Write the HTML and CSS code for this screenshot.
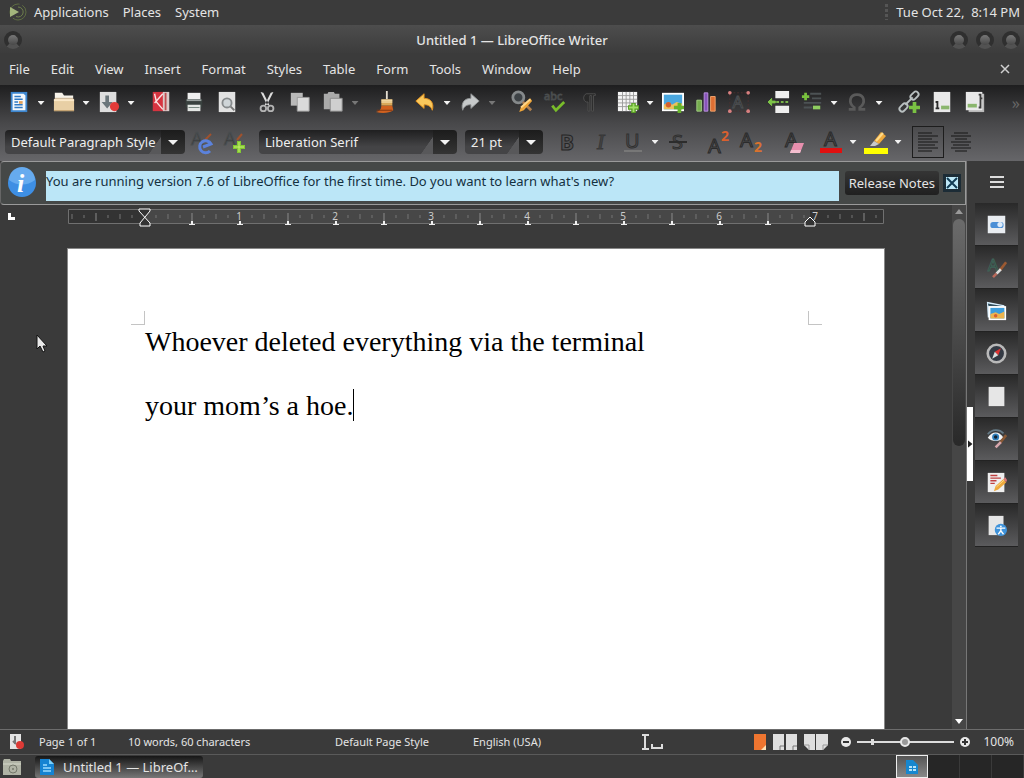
FILE: index.html
```html
<!DOCTYPE html>
<html lang="en">
<head>
    <meta charset="UTF-8">
    <meta name="viewport" content="width=device-width, initial-scale=1.0">
    <title>Untitled 1 — LibreOffice Writer</title>
    <link rel="stylesheet" href="styles.css">
</head>
<body>
<!-- Desktop panel -->
<header class="panel">
    <svg class="panel-logo" width="20" height="20" viewBox="0 0 20 20"><circle cx="10" cy="10" r="8" fill="none" stroke="#5e6d42" stroke-dasharray="18 3"/><path d="M10 5a5 5 0 1 1-2 9.500" fill="none" stroke="#6e7f4c"/><path d="M2 5l9 5-9 5z" fill="#a3b57c"/></svg>
    <nav class="panel-menu">
        <button>Applications</button>
        <button>Places</button>
        <button>System</button>
    </nav>
    <span class="grip"></span>
    <time class="clock">Tue Oct 22,&nbsp; 8:14 PM</time>
</header>

<!-- Window title -->
<div class="titlebar">
    <button class="orb" aria-label="Window menu"></button>
    <h1 class="title">Untitled 1 — LibreOffice Writer</h1>
    <div class="orbs">
        <button class="orb" aria-label="Minimize"></button>
        <button class="orb" aria-label="Maximize"></button>
        <button class="orb" aria-label="Close"></button>
    </div>
</div>

<nav class="menubar">
    <button>File</button>
    <button>Edit</button>
    <button>View</button>
    <button>Insert</button>
    <button>Format</button>
    <button>Styles</button>
    <button>Table</button>
    <button>Form</button>
    <button>Tools</button>
    <button>Window</button>
    <button>Help</button>
    <button class="close-doc" aria-label="Close document"><svg width="10" height="10" viewBox="0 0 10 10"><path d="M1 1l8 8M9 1l-8 8" stroke="#d0d0d0" stroke-width="1.500"/></svg></button>
</nav>

<div class="toolbars">
    <!-- Standard toolbar -->
    <div class="toolbar">
        <div class="group">
            <div class="split">
                <button class="tool" aria-label="New"><svg viewBox="0 0 24 24"><path d="M3 1h18v22H3z" fill="#3d86cf"/><path d="M5 3h12l2 2v16H5z" fill="#f4f8fc"/><path d="M7 6h7M7 9h9M7 12h4M7 15h9M7 18h9" stroke="#2f79c4" stroke-width="1.500"/><path d="M12 11h4v3h-4z" fill="#e2a05b"/></svg></button>
                <button class="drop" aria-label="New options"></button>
            </div>
            <div class="split">
                <button class="tool" aria-label="Open"><svg viewBox="0 0 24 24"><path d="M2 2h8l2 3h10v5H2z" fill="#f7f3ea"/><path d="M2 8h20" stroke="#c5ab85"/><path d="M1 9h22v13H1z" fill="#e8cfa5"/><path d="M1 9h22v2H1z" fill="#fbe9ca"/><path d="M1 21h22v1H1z" fill="#b89562"/></svg></button>
                <button class="drop" aria-label="Open options"></button>
            </div>
            <div class="split">
                <button class="tool" aria-label="Save"><svg viewBox="0 0 24 24"><path d="M2 1h18v22H2z" fill="#dedede"/><path d="M8 5h4v7h4l-6 7-6-7h4z" fill="#6b767b"/><circle cx="18" cy="17" r="5" fill="#e23a38"/></svg></button>
                <button class="drop" aria-label="Save options"></button>
            </div>
        </div>
        <div class="group">
            <button class="tool" aria-label="Export as PDF"><svg viewBox="0 0 24 24"><path d="M3 1h12v21H3z" fill="#d63440"/><path d="M14 1h7v21h-7z" fill="#d9c9c8"/><path d="M17 2v19" stroke="#c24d50" stroke-width="2"/><path d="M5 3l2 9 7 8M14 3l-9 10" fill="none" stroke="#fbe2e2" stroke-width="1.500"/></svg></button>
            <button class="tool" aria-label="Print"><svg viewBox="0 0 24 24"><path d="M5 2h14v7H5z" fill="#f0f0f0"/><path d="M3 9h18v9H3z" fill="#39413f"/><path d="M4 9h16v2H4z" fill="#9aa19f"/><path d="M5 15h14v7H5z" fill="#e4e7e4"/><path d="M6 18h12" stroke="#70807a"/></svg></button>
            <button class="tool" aria-label="Print preview"><svg viewBox="0 0 24 24"><path d="M3 1h18v22H3z" fill="#e2e2e2"/><circle cx="12" cy="13" r="5" fill="#cfd5d8" stroke="#878b8d" stroke-width="2"/><path d="M16 17l4 4" stroke="#777" stroke-width="2"/></svg></button>
        </div>
        <div class="group">
            <button class="tool" aria-label="Cut"><svg viewBox="0 0 24 24"><path d="M5 1l3 1 7 14-3-1zM19 1l-3 1-7 14 3-1z" fill="#dcdcdc"/><circle cx="8" cy="19" r="3" fill="none" stroke="#b4b4b4" stroke-width="2"/><circle cx="16" cy="19" r="3" fill="none" stroke="#b4b4b4" stroke-width="2"/></svg></button>
            <button class="tool" aria-label="Copy"><svg viewBox="0 0 24 24"><path d="M2 2h13v14H2z" fill="#b9b9b9"/><path d="M9 7h13v15H9z" fill="#dadada" stroke="#999"/></svg></button>
            <div class="split">
                <button class="tool" aria-label="Paste"><svg viewBox="0 0 24 24"><path d="M2 3h4l1-2h6l1 2h5v17H2z" fill="#aaa"/><path d="M9 8h13v14H9z" fill="#cfcfcf" stroke="#8b8b8b"/></svg></button>
                <button class="drop dim" aria-label="Paste options"></button>
            </div>
        </div>
        <div class="group">
            <button class="tool" aria-label="Clone formatting"><svg viewBox="0 0 24 24"><path d="M14 0v9" stroke="#e3ddd0" stroke-width="2"/><path d="M8 9h12v7H8z" fill="#d9a95a"/><path d="M8 10h12M8 12h12" stroke="#fff4cf"/><path d="M8 16h12l1 5c-4 3-11 4-19 2 4-1 6-3 6-7z" fill="#d0611f"/><path d="M3 21h17" stroke="#7e3612"/></svg></button>
        </div>
        <div class="group">
            <div class="split">
                <button class="tool" aria-label="Undo"><svg viewBox="0 0 24 24"><path d="M2 11l9-8v5c8 0 11 6 9 13-2-5-5-6-9-6v4z" fill="#f9c85c" stroke="#e18f1e"/></svg></button>
                <button class="drop" aria-label="Undo options"></button>
            </div>
            <div class="split">
                <button class="tool" aria-label="Redo"><svg viewBox="0 0 24 24"><path d="M22 11l-9-8v5C5 8 2 14 4 21c2-5 5-6 9-6v4z" fill="#c6c9ca" stroke="#8c8f90"/></svg></button>
                <button class="drop dim" aria-label="Redo options"></button>
            </div>
        </div>
        <div class="group">
            <button class="tool" aria-label="Find and replace"><svg viewBox="0 0 24 24"><circle cx="8" cy="7" r="6" fill="#3d4246" stroke="#85898b" stroke-width="3"/><path d="M13 12l9 9" stroke="#b08050" stroke-width="3"/><path d="M9 23l2-6 10-9 2 3-9 10z" fill="#eea53a"/><path d="M11 18l10-9" stroke="#ffd78a" stroke-width="2"/></svg></button>
            <button class="tool" aria-label="Spelling"><svg viewBox="0 0 24 24"><text x="0" y="10" font-size="12" fill="#222" stroke="#4a4d4e">abc</text><path d="M9 16l4 5 9-9" fill="none" stroke="#79bd2a" stroke-width="3"/></svg></button>
            <button class="tool" aria-label="Formatting marks"><svg viewBox="0 0 24 24"><path d="M18 3h-8a5 5 0 0 0 0 9h2v10h2V5h2v17h2V5h2V3z" fill="#292929" stroke="#505050"/></svg></button>
        </div>
        <div class="group">
            <div class="split">
                <button class="tool" aria-label="Insert table"><svg viewBox="0 0 24 24"><path d="M1 1h21v21H1z" fill="#f5f5f5"/><path d="M1 5h21M1 9h21M1 13h21M1 17h21M6 1v21M10 1v21M14 1v21M18 1v21" stroke="#999"/><path d="M18 13v11M12 18h12" stroke="#599e24" stroke-width="5"/><path d="M18 14v9M13 18h10" stroke="#a2e068" stroke-width="2"/></svg></button>
                <button class="drop" aria-label="Table options"></button>
            </div>
            <button class="tool" aria-label="Insert image"><svg viewBox="0 0 24 24"><path d="M0 2h24v20H0z" fill="#fff"/><path d="M2 4h20v16H2z" fill="#4aa7df"/><path d="M2 15l5-3 4 3 5-3 6 2v6H2z" fill="#edc05c"/><circle cx="7" cy="15" r="3" fill="#d45f2f"/><path d="M19 13v11M13 18h11" stroke="#67b42c" stroke-width="4"/></svg></button>
            <button class="tool" aria-label="Insert chart"><svg viewBox="0 0 24 24"><path d="M2 10h5v12H2z" fill="#75ab4e" stroke="#a4d184"/><path d="M10 2h4v20h-4z" fill="#8855ba" stroke="#be95e4"/><path d="M17 6h5v16h-5z" fill="#df6f33" stroke="#f5a66e"/></svg></button>
            <button class="tool" aria-label="Text box"><svg viewBox="0 0 24 24"><path d="M2 2h20v20H2z" fill="none" stroke="#4c3030" stroke-dasharray="2 2"/><text x="5" y="18" font-size="18" fill="#222" stroke="#4e5154">A</text><g fill="#d98080"><circle cx="2" cy="2" r="2"/><circle cx="22" cy="2" r="2"/><circle cx="2" cy="22" r="2"/><circle cx="22" cy="22" r="2"/></g></svg></button>
        </div>
        <div class="group">
            <button class="tool" aria-label="Page break"><svg viewBox="0 0 24 24"><path d="M8 0h15v8H8zM8 16h15v8H8z" fill="#eee"/><path d="M9 12h14" stroke="#78b34a" stroke-width="2" stroke-dasharray="3 2"/><path d="M0 12l4-4v3h4v2H4v3z" fill="#7ec548" stroke="#7ec548"/></svg></button>
            <div class="split">
                <button class="tool" aria-label="Insert field"><svg viewBox="0 0 24 24"><path d="M10 3h12M12 8h10M3 13h19M3 18h9" stroke="#4c5254" stroke-width="2"/><path d="M5 2v8M1 6h8" stroke="#79c13e" stroke-width="3"/><path d="M13 16h8v4h-8z" fill="#8fce60"/></svg></button>
                <button class="drop" aria-label="Field options"></button>
            </div>
            <div class="split">
                <button class="tool" aria-label="Special character"><svg viewBox="0 0 24 24"><path d="M3 20h6v-2c-7-5-5-14 3-14s10 9 3 14v2h6" fill="none" stroke="#5a5a5a" stroke-width="3"/></svg></button>
                <button class="drop" aria-label="Special character options"></button>
            </div>
        </div>
        <div class="group">
            <button class="tool" aria-label="Insert hyperlink"><svg viewBox="0 0 24 24"><g fill="none" stroke="#b9c0c1" stroke-width="2"><rect x="-5" y="-3" width="10" height="6" rx="3" transform="translate(18 5) rotate(-45)"/><rect x="-5" y="-3" width="10" height="6" rx="3" transform="translate(6 18) rotate(-45)"/><path d="M8 15l8-8"/></g><path d="M18 12v12M12 18h12" stroke="#7ac143" stroke-width="4"/></svg></button>
            <button class="tool" aria-label="Insert footnote"><svg viewBox="0 0 24 24"><path d="M3 1h18v22H3z" fill="#e9e9e9"/><path d="M5 12h2v7h2M5 19h4" fill="none" stroke="#2b2b2b" stroke-width="2"/><path d="M11 16h9v4h-9z" fill="#8ab66d"/></svg></button>
            <button class="tool" aria-label="Insert bookmark"><svg viewBox="0 0 24 24"><path d="M5 3h17v20H5z" fill="#b9b9b9"/><path d="M2 1h18v20H2z" fill="#e9e9e9"/><path d="M4 14h10v4H4z" fill="#8ab66d"/><path d="M16 4h2v14h-2M18 8h2" fill="none" stroke="#3b3b3b" stroke-width="2"/></svg></button>
        </div>
        <button class="more" aria-label="More tools">»</button>
    </div>

    <!-- Formatting toolbar -->
    <div class="toolbar formatting">
        <div class="group">
            <span class="combo style-combo"><select aria-label="Paragraph style"><option>Default Paragraph Style</option></select></span>
            <button class="tool" aria-label="Update style"><svg viewBox="0 0 24 24"><text x="1" y="15" font-size="18" fill="#333" stroke="#4a4e50">A</text><path d="M15 10l6-6" stroke="#a0522d" stroke-width="2"/><path d="M20 21a6 6 0 1 1 1-7l-8 3" fill="none" stroke="#5b82dc" stroke-width="3"/></svg></button>
            <button class="tool" aria-label="New style"><svg viewBox="0 0 24 24"><text x="1" y="15" font-size="18" fill="#333" stroke="#4a4e50">A</text><path d="M14 10l5-6" stroke="#a0522d" stroke-width="2"/><path d="M16 11v12M10 17h12" stroke="#82c832" stroke-width="4"/><path d="M16 12v10M11 17h10" stroke="#c9ef72"/></svg></button>
        </div>
        <span class="combo font-combo"><select aria-label="Font name"><option>Liberation Serif</option></select></span>
        <span class="combo size-combo"><select aria-label="Font size"><option>21 pt</option></select></span>
        <div class="group">
            <button class="tool" aria-label="Bold"><svg viewBox="0 0 24 24"><text x="5" y="20" font-size="21" font-weight="bold" fill="#505052" stroke="#262626">B</text></svg></button>
            <button class="tool" aria-label="Italic"><svg viewBox="0 0 24 24"><text class="serif" x="9" y="19" font-size="22" font-style="italic" fill="#444" stroke="#383838">I</text></svg></button>
            <div class="split">
                <button class="tool" aria-label="Underline"><svg viewBox="0 0 24 24"><text x="4" y="18" font-size="20" fill="#505052" stroke="#303030">U</text><path d="M3 21h18" stroke="#777" stroke-width="2"/></svg></button>
                <button class="drop" aria-label="Underline options"></button>
            </div>
            <button class="tool" aria-label="Strikethrough"><svg viewBox="0 0 24 24"><text x="6" y="19" font-size="20" fill="#505052" stroke="#303030">S</text><path d="M3 12h18" stroke="#2c2c2c" stroke-width="2"/></svg></button>
        </div>
        <div class="group">
            <button class="tool" aria-label="Superscript"><svg viewBox="0 0 24 24"><text x="2" y="23" font-size="20" fill="#505052" stroke="#2b2b2b">A</text><text x="15" y="11" font-size="14" font-weight="bold" fill="#d9602e">2</text></svg></button>
            <button class="tool" aria-label="Subscript"><svg viewBox="0 0 24 24"><text x="1" y="17" font-size="20" fill="#505052" stroke="#2b2b2b">A</text><text x="15" y="22" font-size="14" font-weight="bold" fill="#d9722e">2</text></svg></button>
        </div>
        <div class="group">
            <button class="tool" aria-label="Clear formatting"><svg viewBox="0 0 24 24"><text x="6" y="17" font-size="20" fill="#505052" stroke="#2b2b2b">A</text><path d="M15 13h10l-4 10H11z" fill="#e78fae"/><path d="M12 20h10l-1 3H11z" fill="#f5bfd0"/></svg></button>
        </div>
        <div class="group">
            <div class="split">
                <button class="tool" aria-label="Font color"><svg viewBox="0 0 24 24"><text x="5" y="16" font-size="20" fill="#505052" stroke="#2b2b2b">A</text><path d="M1 18h22v5H1z" fill="#e01010"/></svg></button>
                <button class="drop" aria-label="Font color options"></button>
            </div>
            <div class="split">
                <button class="tool" aria-label="Highlighting color"><svg viewBox="0 0 24 24"><path d="M0 18h24v6H0z" fill="#ff0"/><path d="M10 11l7-9 5 4-7 8z" fill="#efaa3d"/><path d="M12 11l7-8" stroke="#ffdc8a" stroke-width="2"/><path d="M10 11l5 3-4 2H6z" fill="#c9c9c9"/></svg></button>
                <button class="drop" aria-label="Highlighting options"></button>
            </div>
        </div>
        <div class="group">
            <button class="tool pressed" aria-label="Align left"><svg viewBox="0 0 24 24"><path d="M2 3h14M2 6h20M2 9h14M2 12h20M2 15h17M2 18h20M2 21h14" stroke="#161616"/></svg></button>
            <button class="tool" aria-label="Align center"><svg viewBox="0 0 24 24"><path d="M5 3h14M2 6h20M6 9h12M2 12h20M4 15h16M2 18h20M6 21h12" stroke="#161616"/></svg></button>
        </div>
    </div>
</div>

<div class="workspace">
    <main class="editor">
        <div class="infobar">
            <svg width="30" height="30" viewBox="0 0 30 30"><circle cx="15" cy="15" r="14" fill="#3e8fe4"/><path d="M2 12a13 13 0 0 1 26 0c-8 6-18 6-26 0z" fill="#66abef"/><text class="serif" x="10" y="24" font-size="26" font-style="italic" font-weight="bold" fill="#fff">i</text></svg>
            <p class="info-text">You are running version 7.6 of LibreOffice for the first time. Do you want to learn what's new?</p>
            <button class="notes">Release Notes</button>
            <button class="close-info" aria-label="Close infobar"><svg width="12" height="12" viewBox="0 0 12 12"><path d="M0 0h12v12H0z" fill="#bfe9f8"/><path d="M1 1l10 10M11 1L1 11" stroke="#123c55" stroke-width="2"/></svg></button>
        </div>
        <div class="view">
            <div class="scroll-area">
                <div class="ruler-row">
                    <span class="tab-type"></span>
                    <svg class="ruler" viewBox="0 0 816 20">
                        <defs>
                            <pattern id="ticks" x="76" y="0" width="96" height="20" patternUnits="userSpaceOnUse">
                                <path d="M12 7v3M24 6v5M36 7v3M60 7v3M72 6v5M84 7v3" stroke="#747474"/>
                                <path d="M48 5v8" stroke="#8a8a8a"/>
                            </pattern>
                            <pattern id="tabs" x="52" y="0" width="48" height="20" patternUnits="userSpaceOnUse">
                                <path d="M24 13v4" stroke="#f0f0f0" stroke-width="2"/>
                                <path d="M21 16h6v1h-6z" fill="#f0f0f0"/>
                            </pattern>
                        </defs>
                        <path d="M0 1h816v15H0z" fill="#333"/>
                        <path d="M76 1h666v15H76z" fill="#474747"/>
                        <path d="M0.500 1.500h815v14H0.500z" fill="none" stroke="#707070"/>
                        <path d="M0 2h816v13H0z" fill="url(#ticks)"/>
                        <path d="M84 12h650v7H84z" fill="url(#tabs)"/>
                        <g font-size="10" fill="#ccc" text-anchor="middle">
                            <text x="171" y="12">1</text><text x="267" y="12">2</text><text x="363" y="12">3</text><text x="459" y="12">4</text><text x="555" y="12">5</text><text x="651" y="12">6</text><text x="747" y="12">7</text>
                        </g>
                        <path d="M71 1h11v2l-10 12v3h10v-3L71 3z" fill="#333" stroke="#fff"/>
                        <path d="M742 9l-5 5v4h10v-4z" fill="#333" stroke="#fff"/>
                    </svg>
                </div>
                <article class="page" contenteditable="true" spellcheck="false" role="textbox" aria-label="Document">
                    <span class="corner corner-left"></span>
                    <span class="corner corner-right"></span>
                    <p>Whoever deleted everything via the terminal</p>
                    <p>your mom’s a hoe.<span class="caret"></span></p>
                </article>
                <svg class="pointer" width="12" height="19" viewBox="0 0 12 19"><path d="M1 1v14l3-3 3 6 2-1-2-5h4z" fill="#e8e8e8" stroke="#111"/></svg>
            </div>
            <div class="scrollbar">
                <span class="up"></span>
                <span class="thumb"></span>
                <span class="down"></span>
            </div>
        </div>
    </main>

    <aside class="sidebar">
        <button class="handle" aria-label="Hide sidebar"></button>
        <div class="deck">
            <button class="hamburger" aria-label="Sidebar settings"><svg width="14" height="12" viewBox="0 0 14 12"><path d="M0 1h14M0 6h14M0 11h14" stroke="#ddd" stroke-width="2"/></svg></button>
            <button class="tab" aria-label="Properties"><svg viewBox="0 0 24 24"><path d="M2 2h20v20H2z" fill="#e9edf1"/><rect x="5" y="9" width="15" height="7" rx="3" fill="#4b8fd6"/><circle cx="16" cy="12" r="3" fill="#dcebfa"/></svg></button>
            <button class="tab" aria-label="Styles"><svg viewBox="0 0 24 24"><text x="2" y="16" font-size="19" fill="#303030" stroke="#40665a">A</text><path d="M16 15l7-9" stroke="#9c5a32" stroke-width="3"/><path d="M12 19l5-5" stroke="#ddd" stroke-width="3"/><path d="M8 23l4-4" stroke="#b96a5c" stroke-width="3"/></svg></button>
            <button class="tab" aria-label="Gallery"><svg viewBox="0 0 24 24"><path d="M1 2l20 4v14H2z" fill="#d9f0ff"/><path d="M2 4l18 3H3z" fill="#35505e"/><path d="M3 7h20v16H3z" fill="#fff"/><path d="M5 9h16v12H5z" fill="#3c9ddc"/><path d="M5 16l6-2 4 2 6-3v8H5z" fill="#edb44d"/><circle cx="11" cy="18" r="2" fill="#d76030"/></svg></button>
            <button class="tab" aria-label="Navigator"><svg viewBox="0 0 24 24"><circle cx="12" cy="12" r="10" fill="#343a44" stroke="#b9b9b9" stroke-width="3"/><path d="M17 6l-3 8-4-4z" fill="#d33"/><path d="M7 18l3-8 4 4z" fill="#ddd"/></svg></button>
            <button class="tab" aria-label="Page"><svg viewBox="0 0 24 24"><path d="M3 1h18v22H3z" fill="#e6e6e6"/></svg></button>
            <button class="tab" aria-label="Style inspector"><svg viewBox="0 0 24 24"><path d="M2 10c5-8 13-8 18 0-5 5-13 5-18 0z" fill="#f1f4f6"/><path d="M2 6c5-6 13-6 18-1" fill="none" stroke="#657a86" stroke-width="2"/><circle cx="11" cy="9" r="4" fill="#2f80bc"/><circle cx="11" cy="9" r="2" fill="#123"/><path d="M16 16l7-9" stroke="#8a5a36" stroke-width="3"/><path d="M11 21l6-6" stroke="#d6a6ac" stroke-width="3"/></svg></button>
            <button class="tab" aria-label="Manage changes"><svg viewBox="0 0 24 24"><path d="M2 1h19v22H2z" fill="#efefef"/><path d="M5 4h8M5 7h12M5 10h7M5 13h5" stroke="#c04040" stroke-width="1.500"/><path d="M9 22l2-6 9-8 3 4-9 8z" fill="#eda93c"/><path d="M12 17l9-8" stroke="#ffdf8c"/><path d="M20 8l3 4 1-3-2-3z" fill="#d77"/></svg></button>
            <button class="tab" aria-label="Accessibility check"><svg viewBox="0 0 24 24"><path d="M3 1h17v22H3z" fill="#e6e6e6"/><circle cx="17" cy="17" r="7" fill="#3e92da"/><circle cx="17" cy="13" r="1" fill="#fff"/><path d="M12 15h10M17 15v4M17 18l-3 4M17 18l3 4" stroke="#fff" stroke-width="1.500"/></svg></button>
        </div>
    </aside>
</div>

<footer class="statusbar">
    <svg class="doc-state" width="16" height="18" viewBox="0 0 16 18"><path d="M1 1h11v15H1z" fill="#e5e5e5"/><path d="M6 3v8M4 8l3 3" stroke="#777" stroke-width="2"/><circle cx="11" cy="12" r="4" fill="#dd3a36"/></svg>
    <span class="page-count">Page 1 of 1</span>
    <span class="word-count">10 words, 60 characters</span>
    <span class="page-style">Default Page Style</span>
    <span class="language">English (USA)</span>
    <svg class="insert-mode" width="24" height="18" viewBox="0 0 24 18"><path d="M1 2h7M4 2v14M1 16h7M11 11v4h10v-4" fill="none" stroke="#ddd" stroke-width="2"/></svg>
    <div class="view-modes">
        <button aria-label="Single page"><svg width="12" height="16" viewBox="0 0 12 16"><path d="M0 0h12v16H0z" fill="#ee7530"/><path d="M12 11v5H7z" fill="#ffe1b5"/></svg></button>
        <button aria-label="Multiple pages"><svg width="24" height="16" viewBox="0 0 24 16"><path d="M0 0h11v16H0zM13 0h11v16H13z" fill="#dedede"/><path d="M7 16v-4h4M20 16v-4h4" fill="none" stroke="#777"/></svg></button>
        <button aria-label="Book view"><svg width="24" height="16" viewBox="0 0 24 16"><path d="M0 0h11v16H5l-5-5zM12 0h12v11l-5 5h-7z" fill="#dedede"/><path d="M5 16v-5H0M19 16v-5h5" fill="none" stroke="#999"/></svg></button>
    </div>
    <div class="zoom">
        <button aria-label="Zoom out"><svg width="10" height="10" viewBox="0 0 10 10"><circle cx="5" cy="5" r="5" fill="#e8e8e8"/><path d="M2 5h6" stroke="#333" stroke-width="2"/></svg></button>
        <input type="range" min="0" max="100" value="49" aria-label="Zoom">
        <button aria-label="Zoom in"><svg width="10" height="10" viewBox="0 0 10 10"><circle cx="5" cy="5" r="5" fill="#e8e8e8"/><path d="M2 5h6M5 2v6" stroke="#333" stroke-width="2"/></svg></button>
    </div>
    <span class="percent">100%</span>
</footer>

<div class="taskbar">
    <button class="show-desktop" aria-label="File manager"><svg width="20" height="18" viewBox="0 0 20 18"><path d="M1 3l1-2h6l1 2h10v14H1z" fill="#b0b3a5"/><path d="M1 6h18" stroke="#d5d8ca"/><circle cx="11" cy="11" r="4" fill="none" stroke="#74786b"/><circle cx="11" cy="11" r="1" fill="#74786b"/></svg></button>
    <button class="task">
        <svg width="16" height="18" viewBox="0 0 16 18"><path d="M1 1h9l5 5v11H1z" fill="#1583d2"/><path d="M10 1l5 5h-5z" fill="#7cd0fa"/><path d="M4 7h4M4 10h8M4 13h8" stroke="#9bdcff" stroke-width="1.500"/></svg>
        Untitled 1 — LibreOf…
    </button>
    <div class="pager">
        <button class="desk current" aria-label="Workspace 1"><svg width="14" height="16" viewBox="0 0 14 16"><path d="M1 1h7l5 5v9H1z" fill="#1787cf"/><path d="M4 8h3M8 8h3M4 11h3M8 11h3" stroke="#b8e4fa" stroke-width="2"/></svg></button>
        <button class="desk" aria-label="Workspace 2"></button>
        <button class="desk" aria-label="Workspace 3"></button>
        <button class="desk" aria-label="Workspace 4"></button>
    </div>
</div>
</body>
</html>
```
FILE: styles.css
```css
* {
    box-sizing: border-box;
}

body {
    margin: 0;
    height: 100vh;
    display: flex;
    flex-direction: column;
    overflow: hidden;
    background: #3a3a3a;
    color: #e4e4e4;
    font: 13px/18px "Noto Sans", sans-serif;
}

button {
    margin: 0;
    padding: 0;
    border: 0;
    background: none;
    color: inherit;
    font: inherit;
    white-space: nowrap;
}

svg {
    display: block;
    flex: none;
    overflow: visible;
}

.serif {
    font-family: "Liberation Serif", serif;
}

/* Desktop panel */
.panel {
    display: flex;
    align-items: center;
    height: 25px;
    flex: none;
    padding: 0 4px 2px 8px;
    background: #3b3b3b;
}

.panel-menu {
    display: flex;
    gap: 14px;
    margin-left: 6px;
}

.grip {
    width: 3px;
    height: 16px;
    margin-left: auto;
    background: repeating-linear-gradient(#555 0 3px, transparent 3px 5px);
}

.clock {
    margin-left: 8px;
    white-space: nowrap;
}

/* Title and menus */
.titlebar {
    display: grid;
    grid-template-columns: 72px 1fr 72px;
    align-items: center;
    height: 28px;
    flex: none;
    padding: 2px 4px 0;
    background: linear-gradient(#4d4d4d, #3c3c3c);
}

.title {
    margin: 0;
    text-align: center;
    font-size: 13px;
    line-height: 18px;
    font-weight: 500;
}

.orbs {
    display: flex;
    justify-content: flex-end;
    gap: 8px;
}

.orb {
    width: 18px;
    height: 18px;
    border-radius: 50%;
    border: 4px solid #2f2f2f;
    border-bottom-color: #525252;
    background: linear-gradient(#777, #484848);
}

.menubar {
    display: flex;
    align-items: center;
    gap: 21px;
    height: 32px;
    flex: none;
    padding: 0 14px 0 9px;
    background: #3b3b3b;
}

.close-doc {
    margin-left: auto;
}

/* Toolbars */
.toolbars {
    flex: none;
    background: linear-gradient(#1e1e1f, #48484a 50%, #666669);
}

.toolbar {
    display: flex;
    align-items: center;
    gap: 8px;
    height: 36px;
    padding-left: 3px;
}

.formatting {
    height: 40px;
    padding: 2px 0 0 5px;
}

.group {
    display: flex;
    align-items: center;
    gap: 1px;
}

.split {
    display: flex;
    align-items: center;
}

.tool {
    width: 32px;
    height: 32px;
    padding: 4px;
}

.tool svg {
    width: 24px;
    height: 24px;
}

.toolbar:first-child .tool {
    padding: 4px 5px 6px;
}

.toolbar:first-child .tool svg {
    width: 22px;
    height: 22px;
}

.tool.pressed {
    border: 1px solid #1d1d1d;
    padding: 3px;
}

.drop {
    width: 12px;
    height: 24px;
    display: grid;
    place-items: center;
}

.drop::before,
.combo::after {
    content: "";
    width: 7px;
    height: 4px;
    background: #f2f2f2;
    clip-path: polygon(0 0, 100% 0, 50% 100%);
}

.drop.dim::before {
    background: #777;
}

.more {
    margin: 0 4px 0 auto;
    color: #666;
    font-size: 16px;
}

.combo {
    position: relative;
    height: 24px;
    flex: none;
}

.combo select {
    appearance: none;
    width: 100%;
    height: 24px;
    padding: 0 24px 0 6px;
    border: 0;
    border-radius: 4px;
    background:
        linear-gradient(#1c1c1c, #343434) right / 24px 24px no-repeat,
        linear-gradient(125deg, transparent 60%, #58585a 62%) right 24px top 0 / 14px 24px no-repeat,
        linear-gradient(#1f1f20, #444446 70%);
    color: #eee;
    font: inherit;
}

.combo::after {
    position: absolute;
    top: 10px;
    right: 7px;
    width: 10px;
    height: 5px;
}

.style-combo {
    width: 180px;
}

.font-combo {
    width: 198px;
}

.size-combo {
    width: 78px;
}

/* Workspace */
.workspace {
    display: flex;
    flex: 1;
    min-height: 0;
}

.editor {
    display: flex;
    flex-direction: column;
    flex: 1;
    min-width: 0;
    border-right: 1px solid #777;
}

.infobar {
    display: flex;
    align-items: center;
    height: 44px;
    flex: none;
    padding: 0 4px 0 6px;
    border: 1px solid #9a9a9a;
    border-left-color: #666;
    border-radius: 4px 0 0 4px;
    background: #454847;
}

.info-text {
    flex: 1;
    height: 30px;
    margin: 6px 6px 0 9px;
    background: #bbe6f7;
    color: #14303f;
    line-height: 20px;
    overflow: hidden;
    white-space: nowrap;
}

.notes {
    height: 24px;
    padding: 0 4px;
    border-radius: 3px;
    background: linear-gradient(#353535, #202020);
}

.close-info {
    margin-left: 4px;
    padding: 3px;
    background: #1c2c36;
}

.view {
    display: flex;
    flex: 1;
    min-height: 0;
}

.scroll-area {
    position: relative;
    flex: 1;
    min-width: 0;
    overflow: hidden;
}

.ruler-row {
    display: grid;
    grid-template-columns: 1fr 816px 1fr;
    height: 43px;
    padding-top: 3px;
}

.ruler {
    width: 816px;
    height: 20px;
}

.tab-type {
    width: 7px;
    height: 7px;
    margin: 5px 0 0 8px;
    border-left: 3px solid #fff;
    border-bottom: 3px solid #fff;
}

.page {
    position: relative;
    width: 818px;
    height: 1056px;
    margin: 0 auto;
    padding: 61px 77px;
    border: 1px solid #888;
    background: #fff;
    color: #000;
    font: 28px/64px "Liberation Serif", serif;
    outline: 0;
}

.page p {
    margin: 0;
}

.corner {
    position: absolute;
    top: 62px;
    width: 14px;
    height: 14px;
    border-bottom: 1px solid #c4c4c4;
}

.corner-left {
    left: 63px;
    border-right: 1px solid #c4c4c4;
}

.corner-right {
    right: 62px;
    border-left: 1px solid #c4c4c4;
}

.caret {
    display: inline-block;
    width: 1px;
    height: 32px;
    vertical-align: -6px;
    background: #000;
}

.pointer {
    position: absolute;
    left: 36px;
    top: 129px;
}

.scrollbar {
    display: flex;
    flex-direction: column;
    align-items: center;
    width: 14px;
    padding: 4px 0 5px;
    background: #464646;
}

.up,
.down {
    width: 8px;
    height: 5px;
    background: #999;
    clip-path: polygon(50% 0, 100% 100%, 0 100%);
}

.down {
    margin-top: auto;
    background: #fff;
    clip-path: polygon(0 0, 100% 0, 50% 100%);
}

.thumb {
    width: 12px;
    height: 44%;
    margin-top: 5px;
    border-radius: 6px;
    background: linear-gradient(#6b6b6b, #292929);
}

/* Sidebar */
.sidebar {
    display: flex;
    width: 57px;
}

.handle {
    display: grid;
    place-items: center;
    width: 6px;
    height: 74px;
    margin: auto 0 248px;
    background: #fff;
}

.handle::before {
    content: "";
    width: 5px;
    height: 8px;
    background: #222;
    clip-path: polygon(0 0, 100% 50%, 0 100%);
}

.deck {
    display: flex;
    flex-direction: column;
    width: 43px;
    margin-left: 2px;
}

.hamburger {
    display: grid;
    place-items: center;
    height: 42px;
}

.tab {
    display: grid;
    place-items: center;
    height: 43px;
    border-bottom: 1px solid #222;
    background: linear-gradient(#292929, #5b5b5d);
}

.tab svg {
    width: 21px;
    height: 21px;
}

/* Status bar */
.statusbar {
    display: flex;
    align-items: center;
    height: 25px;
    flex: none;
    padding: 0 10px 0 9px;
    border-top: 1px solid #6c6c6c;
    font-size: 11px;
    white-space: nowrap;
}

.page-count {
    width: 89px;
    margin-left: 14px;
}

.word-count {
    width: 207px;
}

.page-style {
    width: 138px;
}

.language {
    width: 168px;
}

.view-modes {
    display: flex;
    gap: 7px;
    margin-left: auto;
}

.zoom {
    display: flex;
    align-items: center;
    gap: 6px;
    margin: 0 13px;
}

.zoom input {
    appearance: none;
    width: 97px;
    height: 10px;
    margin: 0;
    background:
        linear-gradient(#ddd, #ddd) 14px center / 3px 6px no-repeat,
        linear-gradient(#ddd, #ddd) center / 100% 2px no-repeat;
}

.zoom input::-webkit-slider-thumb {
    appearance: none;
    width: 10px;
    height: 10px;
    border-radius: 50%;
    border: 2px solid #e8e8e8;
    background: #999;
}

.percent {
    font-size: 12px;
}

/* Taskbar */
.taskbar {
    display: flex;
    align-items: center;
    height: 24px;
    flex: none;
    border-top: 1px solid #5a5a5a;
}

.show-desktop {
    margin: 0 13px 0 2px;
}

.task {
    display: flex;
    align-items: center;
    gap: 8px;
    width: 168px;
    height: 22px;
    padding-left: 4px;
    border-radius: 3px;
    background: linear-gradient(#161616, #777);
}

.pager {
    display: flex;
    margin-left: auto;
}

.desk {
    width: 32px;
    height: 23px;
    border-right: 1px solid #3a3a3a;
    background: #262626;
}

.desk.current {
    display: grid;
    place-items: center;
    border: 1px solid #eee;
    background: linear-gradient(#555, #888);
}
```
